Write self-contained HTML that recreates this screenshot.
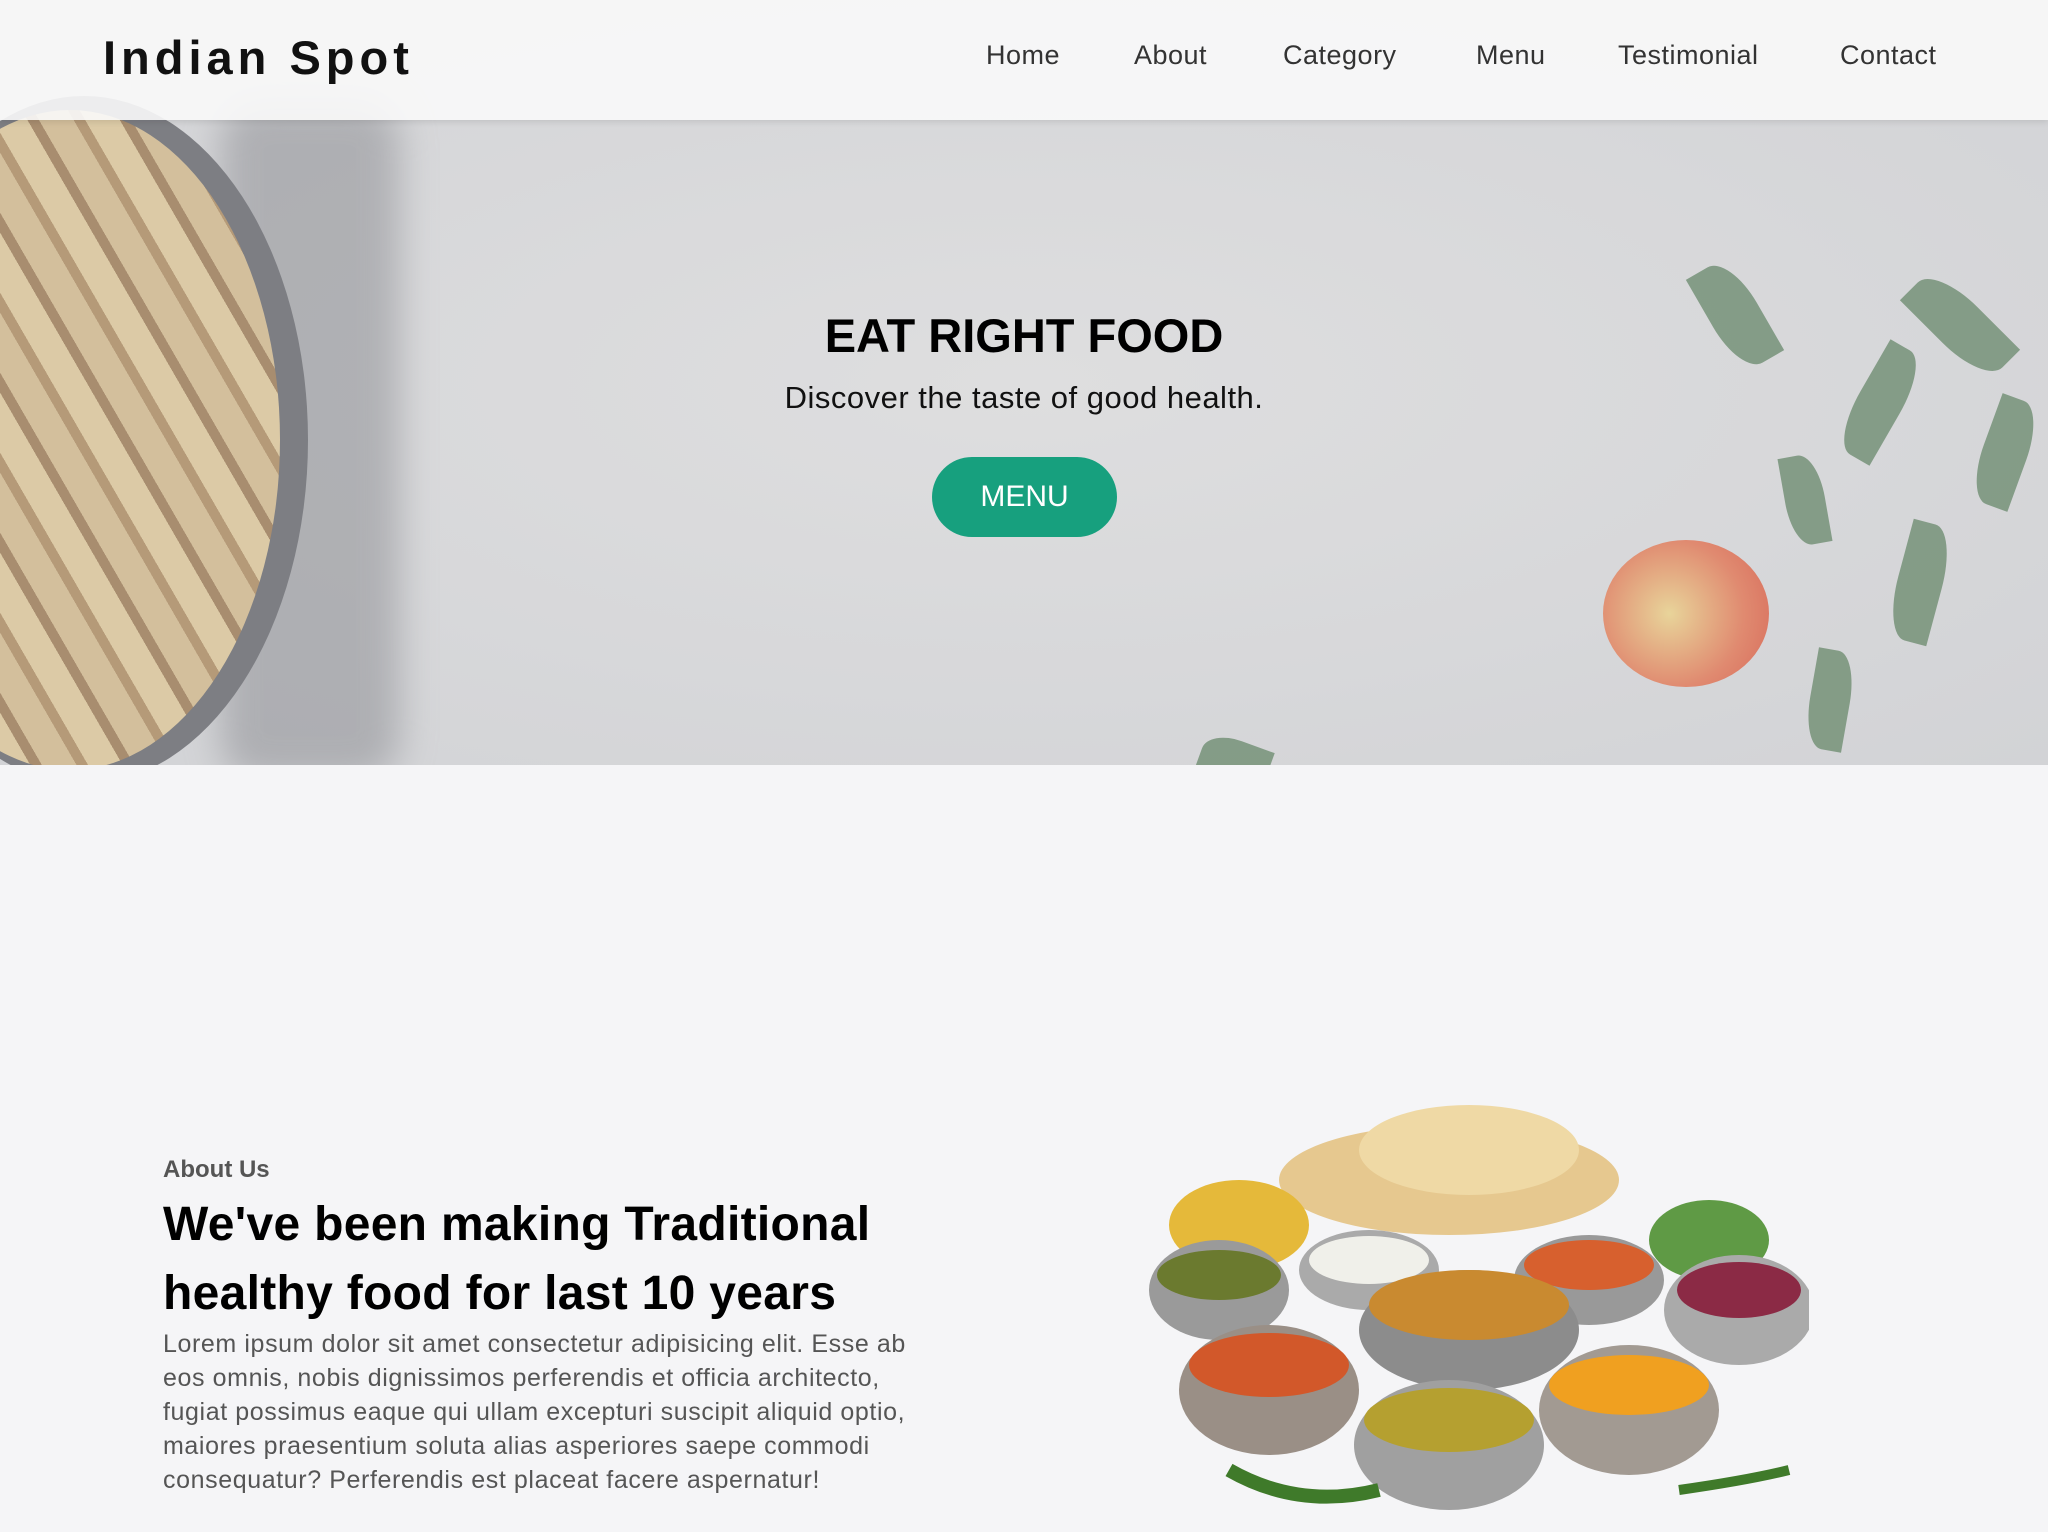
<!DOCTYPE html>
<html><head><style>
*{margin:0;padding:0;box-sizing:border-box}
body{width:2048px;height:1532px;background:#f5f5f7;font-family:"Liberation Sans",sans-serif;overflow:hidden;position:relative}
.hero{position:absolute;left:0;top:0;width:2048px;height:765px;background:radial-gradient(ellipse at 50% 50%,#dededf,#d2d3d6);overflow:hidden}
.pie{position:absolute;left:-140px;top:110px;width:420px;height:660px;border-radius:50%;background:repeating-linear-gradient(60deg,#d3bf9c 0 30px,#b59a78 30px 40px,#dccaa6 40px 70px,#a88d6f 70px 80px),#ccb490;box-shadow:14px 0 0 14px #7d7e83}
.cloth{position:absolute;left:220px;top:100px;width:180px;height:680px;background:#8f9095;border-radius:40px;filter:blur(18px);opacity:.55}
.apple{position:absolute;left:1603px;top:540px;width:166px;height:147px;border-radius:50%;background:radial-gradient(circle at 40% 50%,#e8d49a,#e08a70 60%,#d76a5a)}
.leaf{position:absolute;background:#6f8d72;border-radius:50% 0;opacity:.8}
header{position:absolute;left:0;top:0;width:2048px;height:120px;background:rgba(250,250,250,.9);box-shadow:0 2px 6px rgba(0,0,0,.1)}
.logo{position:absolute;left:103px;top:30px;font-size:47px;font-weight:bold;letter-spacing:5px;color:#111}
nav a{position:absolute;top:40px;font-size:27px;color:#333;text-decoration:none;letter-spacing:.5px}
h1{position:absolute;left:0;width:2048px;top:308px;text-align:center;font-size:47px;font-weight:bold;color:#000}
.sub{position:absolute;left:0;width:2048px;top:380px;text-align:center;font-size:31px;color:#111;letter-spacing:.5px}
.btn{position:absolute;left:932px;top:457px;width:185px;height:80px;border-radius:40px;background:#17a07e;color:#fff;font-size:30px;text-align:center;line-height:80px}
.lab{position:absolute;left:163px;top:1156px;font-size:24px;font-weight:bold;color:#555}
h2{position:absolute;left:163px;top:1190px;font-size:48px;line-height:69px;color:#000;width:820px;letter-spacing:.3px}
p{position:absolute;left:163px;top:1327px;width:780px;font-size:25px;line-height:34px;color:#555;letter-spacing:.6px}
.food{position:absolute;left:1149px;top:1090px;width:660px;height:425px}
</style></head><body>
<div class="hero">
<div class="cloth"></div><div class="pie"></div>
<div class="leaf" style="left:1680px;top:290px;width:110px;height:50px;transform:rotate(60deg)"></div>
<div class="leaf" style="left:1900px;top:300px;width:120px;height:50px;transform:rotate(45deg)"></div>
<div class="leaf" style="left:1820px;top:380px;width:120px;height:45px;transform:rotate(-60deg)"></div>
<div class="leaf" style="left:1950px;top:430px;width:110px;height:45px;transform:rotate(-70deg)"></div>
<div class="leaf" style="left:1760px;top:480px;width:90px;height:40px;transform:rotate(80deg)"></div>
<div class="leaf" style="left:1860px;top:560px;width:120px;height:45px;transform:rotate(-75deg)"></div>
<div class="leaf" style="left:1780px;top:680px;width:100px;height:40px;transform:rotate(-80deg)"></div>
<div class="leaf" style="left:1200px;top:740px;width:70px;height:40px;transform:rotate(20deg)"></div>
<div class="apple"></div>
</div>
<header><div class="logo">Indian Spot</div>
<nav><a style="left:986px">Home</a><a style="left:1134px">About</a><a style="left:1283px">Category</a><a style="left:1476px">Menu</a><a style="left:1618px">Testimonial</a><a style="left:1840px">Contact</a></nav></header>
<h1>EAT RIGHT FOOD</h1>
<div class="sub">Discover the taste of good health.</div>
<div class="btn">MENU</div>
<div class="lab">About Us</div>
<h2>We've been making Traditional healthy food for last 10 years</h2>
<p>Lorem ipsum dolor sit amet consectetur adipisicing elit. Esse ab eos omnis, nobis dignissimos perferendis et officia architecto, fugiat possimus eaque qui ullam excepturi suscipit aliquid optio, maiores praesentium soluta alias asperiores saepe commodi consequatur? Perferendis est placeat facere aspernatur!</p>
<svg class="food" viewBox="0 0 660 425">
<ellipse cx="300" cy="90" rx="170" ry="55" fill="#e6c88f"/>
<ellipse cx="320" cy="60" rx="110" ry="45" fill="#efd9a5"/>
<ellipse cx="90" cy="135" rx="70" ry="45" fill="#e5b93a"/>
<ellipse cx="560" cy="150" rx="60" ry="40" fill="#5f9a45"/>
<ellipse cx="70" cy="200" rx="70" ry="50" fill="#9a9a9a"/><ellipse cx="70" cy="185" rx="62" ry="25" fill="#6b7a2f"/>
<ellipse cx="220" cy="180" rx="70" ry="40" fill="#aaa"/><ellipse cx="220" cy="170" rx="60" ry="24" fill="#f0f0ea"/>
<ellipse cx="440" cy="190" rx="75" ry="45" fill="#999"/><ellipse cx="440" cy="175" rx="65" ry="25" fill="#d7602e"/>
<ellipse cx="590" cy="220" rx="75" ry="55" fill="#aaa"/><ellipse cx="590" cy="200" rx="62" ry="28" fill="#8b2a45"/>
<ellipse cx="320" cy="240" rx="110" ry="60" fill="#8c8c8c"/><ellipse cx="320" cy="215" rx="100" ry="35" fill="#c98a30"/>
<ellipse cx="120" cy="300" rx="90" ry="65" fill="#9a8f86"/><ellipse cx="120" cy="275" rx="80" ry="32" fill="#d2582a"/>
<ellipse cx="300" cy="355" rx="95" ry="65" fill="#a0a0a0"/><ellipse cx="300" cy="330" rx="85" ry="32" fill="#b5a030"/>
<ellipse cx="480" cy="320" rx="90" ry="65" fill="#a29a92"/><ellipse cx="480" cy="295" rx="80" ry="30" fill="#f0a020"/>
<path d="M80 380 Q150 420 230 400" stroke="#3f7a2a" stroke-width="14" fill="none"/>
<path d="M530 400 Q600 390 640 380" stroke="#3f7a2a" stroke-width="10" fill="none"/>
</svg>
</body></html>
